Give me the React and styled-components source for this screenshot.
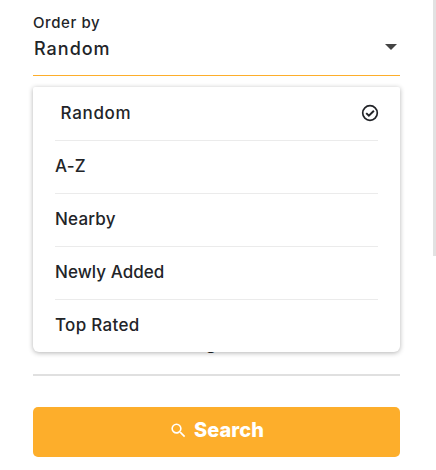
import React, { useState } from "react";
import styled, { createGlobalStyle } from "styled-components";
import { MdSearch } from "react-icons/md";

const options = [
  { label: "Random", spacing: "0.7px" },
  { label: "A-Z", spacing: "0.2px" },
  { label: "Nearby", spacing: "0.2px" },
  { label: "Newly Added", spacing: "0.05px" },
  { label: "Top Rated", spacing: "0.3px" },
];

function CheckCircle() {
  return (
    <svg width="18" height="18" viewBox="0 0 18 18" fill="none" stroke="currentColor">
      <circle cx="9" cy="9" r="7.3" strokeWidth="1.7" />
      <path d="M5.2 9.1 L7.9 11.7 L12.9 6.8" strokeWidth="2" />
    </svg>
  );
}

function App() {
  const [selected, setSelected] = useState("Random");

  return (
    <Page>
      <GlobalStyle />
      <Filters>
        <OrderField>
          <Label>Order by</Label>
          <SelectValue>
            {selected}
            <Caret />
          </SelectValue>
          <Menu>
            {options.map(({ label, spacing }) => (
              <Option
                key={label}
                $selected={label === selected}
                $spacing={spacing}
                onClick={() => setSelected(label)}
              >
                {label}
                {label === selected && <CheckCircle />}
              </Option>
            ))}
          </Menu>
        </OrderField>
        <CoveredField>g</CoveredField>
        <SearchButton>
          <MdSearch size={19} />
          <span>Search</span>
        </SearchButton>
      </Filters>
      <ScrollThumb />
    </Page>
  );
}

const GlobalStyle = createGlobalStyle`
  * {
    box-sizing: border-box;
  }

  body {
    margin: 0;
    background: #fff;
    color: #222428;
    font-family: "Inter", "Liberation Sans", sans-serif;
  }
`;

const Page = styled.div`
  display: flex;
  justify-content: space-between;
  height: 470px;
  overflow: hidden;
`;

const Filters = styled.div`
  display: flex;
  flex-direction: column;
  width: 367px;
  margin-left: 33px;
`;

const OrderField = styled.div`
  position: relative;
  height: 76px;
  padding-top: 12px;
  border-bottom: 1px solid #fdae2b;
`;

const Label = styled.div`
  font-size: 15px;
  font-weight: 500;
  line-height: 22px;
  letter-spacing: 0.6px;
`;

const SelectValue = styled.div`
  display: flex;
  justify-content: space-between;
  padding: 2px 3px 0 1px;
  font-size: 18px;
  font-weight: 500;
  line-height: 26px;
  letter-spacing: 1px;
`;

const Caret = styled.i`
  height: 0;
  margin-top: 8px;
  border: 6px solid transparent;
  border-top-color: #444;
  border-bottom: 0;
`;

const Menu = styled.ul`
  position: absolute;
  top: 87px;
  left: 0;
  z-index: 1;
  width: 100%;
  height: 265px;
  margin: 0;
  padding: 1px 22px 0;
  list-style: none;
  background: #fff;
  border-radius: 2px 2px 6px 6px;
  box-shadow: 0 1px 5px rgba(0, 0, 0, 0.3);
`;

const Option = styled.li`
  display: flex;
  align-items: center;
  justify-content: space-between;
  height: 53px;
  padding: 0 0 2px ${({ $selected }) => ($selected ? "5.5px" : "0")};
  border-bottom: 1px solid #ebebeb;
  font-size: 17px;
  font-weight: 500;
  letter-spacing: ${({ $spacing }) => $spacing};
  cursor: pointer;

  &:last-child {
    height: 50px;
    padding-bottom: 0;
    border-bottom: 0;
  }

  svg {
    margin-right: -1px;
  }
`;

const CoveredField = styled.div`
  display: flex;
  align-items: flex-end;
  height: 300px;
  padding: 0 0 18px 172.5px;
  border-bottom: 2px solid #e0e0e0;
  font-size: 18px;
  font-weight: 500;
  line-height: 26px;
`;

const SearchButton = styled.button`
  display: flex;
  align-items: center;
  justify-content: center;
  gap: 6px;
  height: 50px;
  margin-top: 31px;
  padding: 0 0 3px;
  border: 0;
  border-radius: 5px;
  background: #fdae2b;
  color: #fff;
  font-family: inherit;
  font-size: 20px;
  font-weight: 800;
  letter-spacing: 0.1px;
  cursor: pointer;

  span {
    margin-top: -1px;
  }
`;

const ScrollThumb = styled.div`
  width: 3px;
  height: 256px;
  background: #e2e2e2;
`;

export default App;
